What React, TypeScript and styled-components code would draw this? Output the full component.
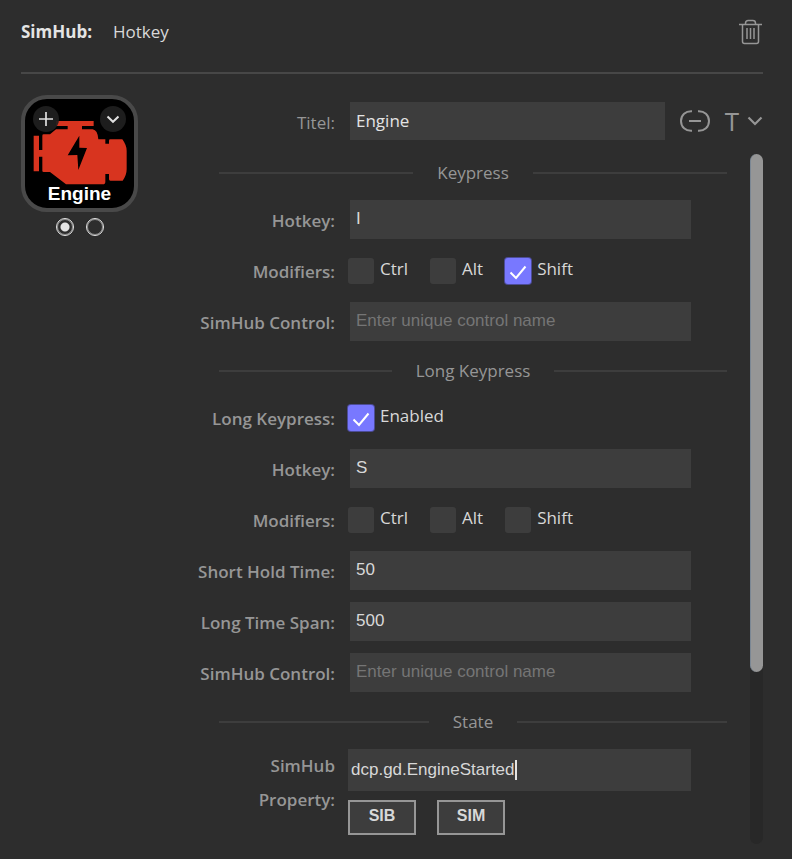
import React, { useId, useState } from "react";
import styled, { createGlobalStyle } from "styled-components";

const UI_FONT = '"Segoe UI", "Open Sans", "Noto Sans", sans-serif';
const FIELD_FONT = 'Arial, "Liberation Sans", sans-serif';

const GlobalStyle = createGlobalStyle`
  *, *::before, *::after { box-sizing: border-box; }
  body {
    margin: 0;
    background: #2d2d2d;
    color: #d8d8d8;
    font-family: ${UI_FONT};
    font-size: 17px;
  }
  button, input { font: inherit; color: inherit; margin: 0; }
`;

const Panel = styled.main`
  min-height: 100vh;
  display: flex;
  flex-direction: column;
  padding: 0 29px 15px 21px;
`;

const Header = styled.header`
  display: flex;
  align-items: center;
  gap: 21px;
  padding: 16px 0 24px;
  border-bottom: 2px solid #474747;
  line-height: 32px;
`;

const PluginName = styled.h1`
  margin: 0;
  font-size: 17px;
  font-weight: 700;
  color: #e4e4e4;
`;

const ActionName = styled.span`
  flex: 1;
  font-size: 17px;
  color: #d8d8d8;
`;

const IconButton = styled.button`
  display: flex;
  align-items: center;
  padding: 0;
  border: 0;
  background: none;
  color: #969696;
  cursor: pointer;
`;

const Body = styled.div`
  flex: 1;
  display: grid;
  grid-template-columns: 117px minmax(0, 1fr);
  padding-top: 21px;
`;

const Preview = styled.aside`
  display: flex;
  flex-direction: column;
  gap: 6px;
`;

const KeyTile = styled.div`
  position: relative;
  height: 117px;
  border: 4px solid #494949;
  border-radius: 26px;
  background: #000;
  overflow: hidden;
`;

const EngineArt = styled.svg`
  display: block;
  width: 100%;
  height: 100%;
`;

const KeyCaption = styled.span`
  position: absolute;
  left: 0;
  right: 0;
  bottom: 2px;
  text-align: center;
  font: 700 19px/24px ${FIELD_FONT};
  color: #fff;
  text-shadow: 0 0 2px #000, 0 0 3px #000;
`;

const TileButton = styled.button<{ $side: "left" | "right" }>`
  position: absolute;
  top: 7px;
  ${(p) => p.$side}: 8px;
  width: 26px;
  height: 26px;
  display: flex;
  align-items: center;
  justify-content: center;
  padding: 0;
  border: 0;
  border-radius: 50%;
  background: rgba(32, 32, 32, 0.92);
  color: #e0e0e0;
`;

const StateRadios = styled.div`
  display: flex;
  justify-content: center;
  gap: 12px;
`;

const Radio = styled.input.attrs({ type: "radio" })`
  appearance: none;
  width: 18px;
  height: 18px;
  border: 1px solid #e4e4e4;
  outline: 1px solid rgba(228, 228, 228, 0.5);
  outline-offset: -2px;
  border-radius: 50%;
  &:checked {
    background: radial-gradient(circle, #e4e4e4 4px, transparent 5px);
  }
`;

const Form = styled.form`
  display: flex;
  flex-direction: column;
  gap: 14px;
  padding-top: 7px;
`;

const TitleRow = styled.div`
  display: grid;
  grid-template-columns: 197px minmax(0, 1fr) auto auto;
  column-gap: 15px;
  align-items: center;
`;

const TitleLabel = styled.label`
  text-align: right;
  line-height: 34px;
  padding-top: 3px;
  color: #969696;
`;

const TitleInput = styled.input`
  width: 100%;
  height: 38px;
  padding: 0 6px 2px;
  border: 0;
  background: #3d3d3d;
  color: #e4e4e4;
  font-size: 17px;
`;

const TypeButton = styled(IconButton)`
  gap: 8px;
  font-size: 26px;
  line-height: 34px;
`;

const ScrollArea = styled.div`
  flex: 1;
  display: flex;
`;

const Rows = styled.div`
  flex: 1;
  min-width: 0;
  display: flex;
  flex-direction: column;
  gap: 12px;
  padding: 1px 23px 9px 0;
`;

const ScrollTrack = styled.div`
  width: 13px;
  border-radius: 7px;
  background: #282828;
`;

const ScrollThumb = styled.div`
  height: 75%;
  border-radius: 7px;
  background: #969696;
  border-left: 1px solid #7b8794;
`;

const SectionHeading = styled.h2`
  display: flex;
  align-items: center;
  gap: 24px;
  margin: 0 0 0 81px;
  padding-top: 3px;
  font-size: 17px;
  font-weight: 400;
  line-height: 30px;
  color: #969696;
  &::before, &::after {
    content: "";
    flex: 1;
    height: 2px;
    background: #3d3d3d;
  }
`;

const Row = styled.div`
  display: grid;
  grid-template-columns: 197px minmax(0, 1fr);
  column-gap: 13px;
  padding-right: 36px;
`;

const RowLabel = styled.label<{ $multiline?: boolean }>`
  text-align: right;
  font-weight: 600;
  line-height: ${(p) => (p.$multiline ? 34 : 36)}px;
  padding-top: ${(p) => (p.$multiline ? 0 : 3)}px;
  color: #969696;
`;

const InputCell = styled.div`
  display: flex;
  padding-left: 2px;
`;

const TextInput = styled.input`
  width: 100%;
  height: 39px;
  padding: 0 6px 2px;
  border: 0;
  background: #3d3d3d;
  color: #d8d8d8;
  font: 17px ${FIELD_FONT};
  &::placeholder { color: #757575; opacity: 1; }
`;

const Checks = styled.div`
  display: flex;
  align-items: center;
  gap: 22px;
  height: 39px;
`;

const CheckLabel = styled.label`
  display: flex;
  align-items: center;
  gap: 6px;
  color: #d8d8d8;
`;

const CheckText = styled.span`
  line-height: 36px;
  padding-bottom: 3px;
`;

const CheckBox = styled.span`
  display: grid;
  width: 26px;
  height: 26px;
  & > * { grid-area: 1 / 1; }
`;

const CheckInput = styled.input.attrs({ type: "checkbox" })`
  appearance: none;
  width: 26px;
  height: 26px;
  border-radius: 3px;
  background: #3d3d3d;
  &:checked {
    background: #7878ff;
    box-shadow: 0 0 0 1px #4c4c96;
  }
`;

const Tick = styled.svg`
  width: 26px;
  height: 26px;
  pointer-events: none;
`;

const PropertyCell = styled.div`
  display: flex;
  flex-direction: column;
  gap: 9px;
`;

const PropertyField = styled.div`
  display: flex;
  align-items: center;
  height: 42px;
  padding: 0 3px;
  background: #3d3d3d;
`;

const PropertyInput = styled.input`
  field-sizing: content;
  height: 42px;
  padding: 0;
  border: 0;
  outline: 0;
  background: none;
  caret-color: transparent;
  font: 17px ${FIELD_FONT};
`;

const Caret = styled.span`
  width: 2px;
  height: 20px;
  background: #e4e4e4;
`;

const ButtonRow = styled.div`
  display: flex;
  gap: 21px;
`;

const OutlineButton = styled.button`
  min-width: 68px;
  height: 35px;
  padding: 0 16px 3px;
  border: 2px solid #969696;
  background: #3d3d3d;
  color: #d8d8d8;
  font: 700 16px ${FIELD_FONT};
`;

function TextRow({ label, initial = "", placeholder }: { label: string; initial?: string; placeholder?: string }) {
  const id = useId();
  return (
    <Row>
      <RowLabel htmlFor={id}>{label}</RowLabel>
      <InputCell>
        <TextInput id={id} defaultValue={initial} placeholder={placeholder} />
      </InputCell>
    </Row>
  );
}

function Check({ text, initial = false, id }: { text: string; initial?: boolean; id?: string }) {
  const [on, setOn] = useState(initial);
  return (
    <CheckLabel>
      <CheckBox>
        <CheckInput id={id} checked={on} onChange={(e) => setOn(e.target.checked)} />
        {on && (
          <Tick viewBox="0 0 26 26" fill="none" stroke="#fff" strokeWidth="2">
            <path d="M5.5 14.5 11 20 20.5 8.5" />
          </Tick>
        )}
      </CheckBox>
      <CheckText>{text}</CheckText>
    </CheckLabel>
  );
}

function ModifiersRow({ shift = false }: { shift?: boolean }) {
  return (
    <Row>
      <RowLabel as="span">Modifiers:</RowLabel>
      <Checks role="group" aria-label="Modifiers">
        <Check text="Ctrl" />
        <Check text="Alt" />
        <Check text="Shift" initial={shift} />
      </Checks>
    </Row>
  );
}

export default function App() {
  return (
    <Panel>
      <GlobalStyle />
      <Header>
        <PluginName>SimHub:</PluginName>
        <ActionName>Hotkey</ActionName>
        <IconButton aria-label="Delete">
          <svg width="24" height="26" viewBox="0 0 24 26" fill="none" stroke="currentColor" strokeWidth="1.5">
            <path d="M0 5.500h23M6.500 5.500V4.200q0-2.700 2.700-2.700h4.600q2.700 0 2.700 2.700V5.500M3.500 5.500v17q0 2 2 2h12q2 0 2-2v-17M8 9v11M11.500 9v11M15 9v11" />
          </svg>
        </IconButton>
      </Header>
      <Body>
        <Preview>
          <KeyTile>
            <EngineArt viewBox="75 297 327 327">
              <g fill="#d8341f">
                <path d="M168 363H281V378H246V388H278Q293 390 295 418H316V431H327V422Q327 418 331 418H367Q380 436 380 452V508Q380 526 368 542H331Q327 542 327 538V522H316V545Q316 553 308 553H198L150 516H131Q127 516 127 512V470H117V514H101V407H117V450H127V407Q127 403 131 403H150L168 388H203V378H168Z" />
              </g>
              <path d="M238 407 203 466 232 465 235 510 261 444 238 443Z" fill="#000" />
            </EngineArt>
            <TileButton $side="left" aria-label="Add">
              <svg width="14" height="14" viewBox="0 0 14 14" stroke="currentColor" strokeWidth="1.700">
                <path d="M7 0v14M0 7h14" />
              </svg>
            </TileButton>
            <TileButton $side="right" aria-label="More">
              <svg width="14" height="14" viewBox="0 0 14 14" fill="none" stroke="currentColor" strokeWidth="2">
                <path d="M1.500 4.500 7 9.800 12.500 4.500" />
              </svg>
            </TileButton>
            <KeyCaption>Engine</KeyCaption>
          </KeyTile>
          <StateRadios role="radiogroup" aria-label="Key state">
            <Radio name="state" aria-label="State 1" defaultChecked />
            <Radio name="state" aria-label="State 2" />
          </StateRadios>
        </Preview>
        <Form onSubmit={(e) => e.preventDefault()}>
          <TitleRow>
            <TitleLabel htmlFor="title">Titel:</TitleLabel>
            <TitleInput id="title" defaultValue="Engine" />
            <IconButton type="button" aria-label="Link title">
              <svg width="30" height="22" viewBox="0 0 30 22" fill="none" stroke="currentColor" strokeWidth="2">
                <path d="M12 1.200C5.500.800 1 5 1 11s4.500 10.200 11 9.800M18 1.200C24.500.800 29 5 29 11s-4.500 10.200-11 9.800M9 11h12" />
              </svg>
            </IconButton>
            <TypeButton type="button" aria-label="Text style">
              <span>T</span>
              <svg width="16" height="10" viewBox="0 0 16 10" fill="none" stroke="currentColor" strokeWidth="2.200">
                <path d="M1.500 1.500 8 8 14.500 1.500" />
              </svg>
            </TypeButton>
          </TitleRow>
          <ScrollArea>
            <Rows>
              <SectionHeading>Keypress</SectionHeading>
              <TextRow label="Hotkey:" initial="I" />
              <ModifiersRow shift />
              <TextRow label="SimHub Control:" placeholder="Enter unique control name" />
              <SectionHeading>Long Keypress</SectionHeading>
              <Row>
                <RowLabel htmlFor="long-enabled">Long Keypress:</RowLabel>
                <Checks>
                  <Check id="long-enabled" text="Enabled" initial />
                </Checks>
              </Row>
              <TextRow label="Hotkey:" initial="S" />
              <ModifiersRow />
              <TextRow label="Short Hold Time:" initial="50" />
              <TextRow label="Long Time Span:" initial="500" />
              <TextRow label="SimHub Control:" placeholder="Enter unique control name" />
              <SectionHeading>State</SectionHeading>
              <Row>
                <RowLabel htmlFor="property" $multiline>
                  SimHub
                  <br />
                  Property:
                </RowLabel>
                <PropertyCell>
                  <PropertyField>
                    <PropertyInput id="property" defaultValue="dcp.gd.EngineStarted" />
                    <Caret />
                  </PropertyField>
                  <ButtonRow>
                    <OutlineButton type="button">SIB</OutlineButton>
                    <OutlineButton type="button">SIM</OutlineButton>
                  </ButtonRow>
                </PropertyCell>
              </Row>
            </Rows>
            <ScrollTrack>
              <ScrollThumb />
            </ScrollTrack>
          </ScrollArea>
        </Form>
      </Body>
    </Panel>
  );
}
